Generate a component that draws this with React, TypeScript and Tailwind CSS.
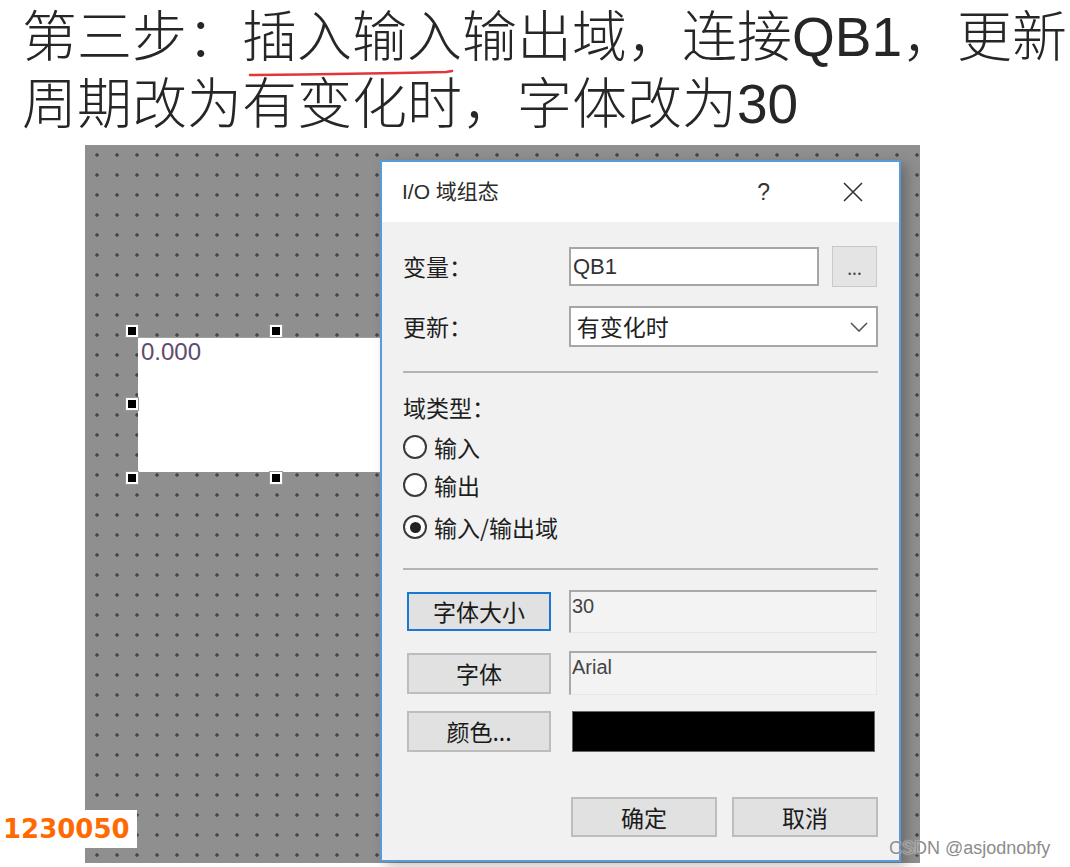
import React from "react";

const cjk = { fontFamily: '"Noto Sans CJK SC", "Liberation Sans", sans-serif' };
const mixed = { fontFamily: '"Liberation Sans", "Noto Sans CJK SC", sans-serif' };

// selection handles around the I/O field (canvas coords, top-left of each square)
const handles = [
  { left: 42, top: 181 },
  { left: 186, top: 181 },
  { left: 42, top: 254 },
  { left: 42, top: 328 },
  { left: 186, top: 328 },
];

const WinButton = ({
  label,
  focused,
  className = "",
}: {
  label: string;
  focused?: boolean;
  className?: string;
}) => (
  <div
    className={`flex items-center justify-center bg-[#e1e1e1] border-2 text-[23px] text-[#1a1a1a] ${
      focused ? "border-[#1a78d2]" : "border-[#bdbdbd]"
    } ${className}`}
    style={cjk}
  >
    {label}
  </div>
);

const Radio = ({ label, checked }: { label: string; checked?: boolean }) => (
  <div className="flex items-center h-[38px]">
    <div className="w-[24px] h-[24px] rounded-full border-2 border-[#3a3a3a] bg-white flex items-center justify-center">
      {checked && <div className="w-[11px] h-[11px] rounded-full bg-[#222]" />}
    </div>
    <span className="ml-[7px] text-[23px] text-[#1e1e1e] leading-none" style={cjk}>
      {label}
    </span>
  </div>
);

const ReadOnlyField = ({ value, className = "" }: { value: string; className?: string }) => (
  <div
    className={`w-[308px] bg-[#f3f3f3] border-t-2 border-l-2 border-r border-b border-t-[#a9a9a9] border-l-[#a9a9a9] border-r-[#e6e6e6] border-b-[#e6e6e6] pl-[1px] pt-[3px] text-[20px] leading-[22px] text-[#444] ${className}`}
    style={mixed}
  >
    {value}
  </div>
);

const Dialog = () => (
  <div className="absolute left-[295px] top-[15px] w-[521px] h-[702px] border-2 border-[#5b9ad9] flex flex-col shadow-[6px_4px_12px_rgba(0,0,0,0.25)]">
    {/* title bar */}
    <div className="h-[60px] bg-white flex items-center pl-[20px] pr-[35px] shrink-0">
      <span className="text-[21px] text-[#2b2b2b]" style={mixed}>
        I/O 域组态
      </span>
      <span className="ml-auto text-[23px] text-[#333]" style={mixed}>
        ?
      </span>
      <svg width="22" height="22" viewBox="0 0 22 22" className="ml-[72px]">
        <path d="M2 2 L20 20 M20 2 L2 20" stroke="#333" strokeWidth="1.6" fill="none" />
      </svg>
    </div>

    {/* body */}
    <div className="flex-1 bg-[#f1f1f1] px-[21px] pt-[24px] flex flex-col text-[#1e1e1e]">
      <div className="flex items-center h-[41px]">
        <span className="w-[166px] text-[23px]" style={cjk}>
          变量：
        </span>
        <div
          className="w-[250px] h-[39px] bg-white border-2 border-[#a6a6a6] flex items-center pl-[2px] text-[22px] text-[#333]"
          style={mixed}
        >
          QB1
        </div>
        <div className="ml-[13px] w-[45px] h-[41px] bg-[#e4e4e4] border border-[#c9c9c9] flex items-center justify-center text-[18px] text-[#444] pt-[4px]">
          ...
        </div>
      </div>

      <div className="flex items-center h-[41px] mt-[19px]">
        <span className="w-[166px] text-[23px]" style={cjk}>
          更新：
        </span>
        <div className="w-[310px] h-[41px] bg-white border-2 border-[#a6a6a6] flex items-center pl-[6px] pr-[8px]">
          <span className="text-[23px] text-[#222]" style={cjk}>
            有变化时
          </span>
          <svg width="18" height="10" viewBox="0 0 18 10" className="ml-auto">
            <path d="M1 1 L9 9 L17 1" stroke="#555" strokeWidth="1.6" fill="none" />
          </svg>
        </div>
      </div>

      <div className="mt-[24px] h-[2px] bg-[#b4b4b4]" />

      <div className="mt-[20px] text-[23px] leading-[28px]" style={cjk}>
        域类型：
      </div>
      <div className="mt-[7px]">
        <Radio label="输入" />
        <Radio label="输出" />
        <div className="mt-[4px]">
          <Radio label="输入/输出域" checked />
        </div>
      </div>

      <div className="mt-[22px] h-[2px] bg-[#b4b4b4]" />

      <div className="flex items-center h-[43px] mt-[20px]">
        <div className="w-[166px] pl-[4px]">
          <WinButton label="字体大小" focused className="w-[144px] h-[39px]" />
        </div>
        <ReadOnlyField value="30" className="h-[43px]" />
      </div>

      <div className="flex items-center h-[44px] mt-[18px]">
        <div className="w-[166px] pl-[4px]">
          <WinButton label="字体" className="w-[144px] h-[41px]" />
        </div>
        <ReadOnlyField value="Arial" className="h-[44px]" />
      </div>

      <div className="flex items-center h-[41px] mt-[16px]">
        <div className="w-[169px] pl-[4px]">
          <WinButton label="颜色..." className="w-[144px] h-[41px]" />
        </div>
        <div className="w-[303px] h-[41px] bg-black border border-[#666]" />
      </div>

      <div className="flex justify-end gap-[15px] mt-[45px]">
        <WinButton label="确定" className="w-[146px] h-[40px]" />
        <WinButton label="取消" className="w-[146px] h-[40px]" />
      </div>
    </div>
  </div>
);

export default function App() {
  return (
    <div className="relative w-[1070px] h-[867px] bg-white overflow-hidden">
      {/* heading */}
      <div
        className="pl-[22px] pt-[4px] text-[55px] leading-[67px] font-light text-[#262626] whitespace-nowrap"
        style={mixed}
      >
        <div>第三步：插入输入输出域，连接QB1，更新</div>
        <div>周期改为有变化时，字体改为30</div>
      </div>
      <svg className="absolute left-0 top-0" width="1070" height="100">
        <path d="M250 75 Q350 74 446 72 L452 71" stroke="#e0363c" strokeWidth="2.5" fill="none" strokeLinecap="round" />
      </svg>

      {/* editor canvas */}
      <div className="relative ml-[85px] mt-[7px] w-[835px] h-[718px] bg-[#8f8f8f] bg-[radial-gradient(circle,#454545_1.4px,transparent_2px)] bg-[length:20px_20px] bg-[position:2px_0px]">
        <div className="absolute left-[53px] top-[192px] w-[276px] h-[135px] bg-white border-t border-[#a0a0a0]">
          <div className="pl-[3px] text-[24px] leading-[28px] text-[#5e4b6e]" style={mixed}>
            0.000
          </div>
        </div>
        {handles.map((h, i) => (
          <div
            key={i}
            className="absolute w-[12px] h-[12px] bg-black border-2 border-white outline outline-[#9a9a9a]"
            style={{ left: h.left - 1, top: h.top - 1 }}
          />
        ))}
        <Dialog />
      </div>

      {/* overlays */}
      <div className="absolute left-0 top-[810px] w-[137px] h-[38px] bg-white flex items-center pl-[3px]">
        <span
          className="text-[26px] font-bold text-[#ff6a00] leading-none"
          style={{ fontFamily: '"DejaVu Sans", sans-serif' }}
        >
          1230050
        </span>
      </div>
      <div
        className="absolute left-[889px] top-[837px] text-[18px] leading-[22px] text-[#8c8c8c] [text-shadow:0_0_2px_#fff]"
        style={mixed}
      >
        CSDN @asjodnobfy
      </div>
    </div>
  );
}
